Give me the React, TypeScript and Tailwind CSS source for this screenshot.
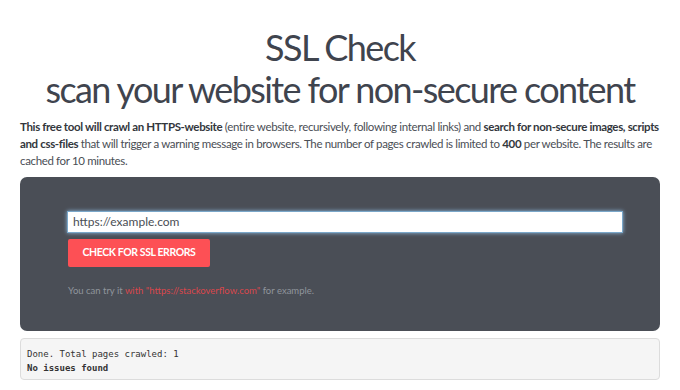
export default function App() {
  return (
    <div className="min-h-[390px] bg-white px-5 pt-[26px] text-[#474b52]" style={{ fontFamily: "Lato, 'Open Sans', sans-serif" }}>
      <h1 className="text-center text-[36px] leading-[42px] font-normal tracking-[-1.6px] text-[#3f444e]">
        SSL Check
        <br />
        scan your website for non-secure content
      </h1>
      <p className="mt-[8px] text-[11.5px] leading-[17px] tracking-[-0.35px] text-[#4a4e55]">
        <b className="font-bold text-[#33373d]">This free tool will crawl an HTTPS-website</b> (entire website, recursively, following internal links) and{" "}
        <b className="font-bold text-[#33373d]">search for non-secure images, scripts and css-files</b> that will trigger a warning message in browsers. The number of pages crawled is limited to{" "}
        <b className="font-bold text-[#33373d]">400</b> per website. The results are cached for 10 minutes.
      </p>
      <div className="mt-[8px] h-[154px] rounded-[7px] bg-[#4a4e56] px-[48px] pt-[35px]">
        <div className="mr-[-10px] h-[20px] bg-white shadow-[0_0_0_1px_#7aa7c9,0_0_4px_1px_#8fb8dc] flex items-center px-[5px] text-[12px] text-[#4a4e55]">
          https://example.com
        </div>
        <div className="mt-[7px] flex h-[28px] w-[142px] items-center justify-center rounded-[2px] bg-[#fd5055] text-[10.5px] font-bold tracking-[-0.4px] text-white">
          CHECK FOR SSL ERRORS
        </div>
        <div className="mt-[17px] text-[9.5px] text-[#90959c]">
          You can try it <span className="text-[#d9474c]">with "https://stackoverflow.com"</span> for example.
        </div>
      </div>
      <div className="mt-[7px] h-[42px] rounded-[4px] border border-[#dcdcdc] bg-[#f5f5f5] px-[6px] pt-[8px] text-[9px] leading-[14px] text-[#333]" style={{ fontFamily: "'DejaVu Sans Mono', monospace" }}>
        <div>Done. Total pages crawled: 1</div>
        <div className="font-bold">No issues found</div>
      </div>
    </div>
  );
}
